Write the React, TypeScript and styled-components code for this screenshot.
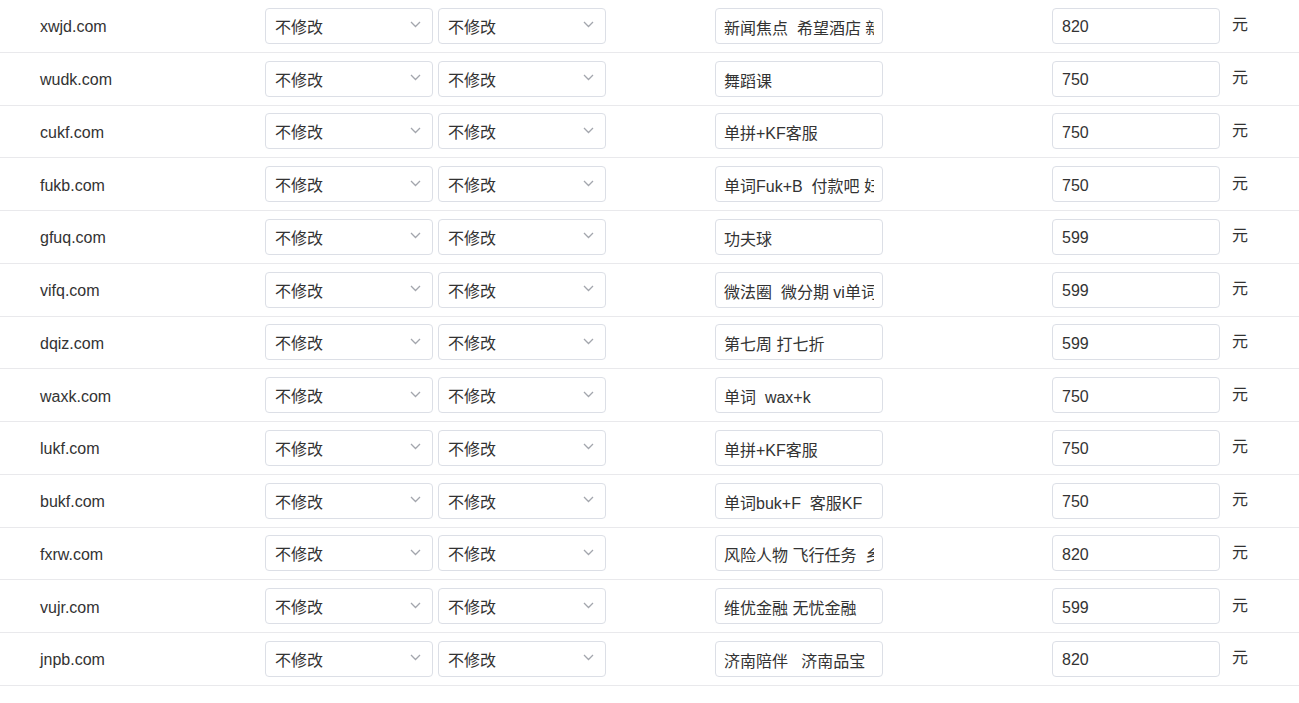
import React from "react";
import styled, { createGlobalStyle } from "styled-components";

const Global = createGlobalStyle`
  html, body { margin: 0; padding: 0; background: #fff; }
  body {
    font-family: "Liberation Sans", "Noto Sans CJK SC", sans-serif;
    color: #333;
    overflow: hidden;
  }
`;

const Table = styled.div`
  width: 1299px;
`;

const Row = styled.div`
  display: grid;
  grid-template-columns: 265px 342px 108px 168px 169px 168px 1fr;
  align-items: center;
  height: 52.75px;
  box-sizing: border-box;
  border-bottom: 1px solid #e9e9ec;
`;

const Domain = styled.div`
  padding-left: 40px;
  font-size: 16px;
  color: #333;
  padding-top: 3px;
`;

const SelectPair = styled.div`
  display: flex;
  gap: 5px;
`;

const Select = styled.div`
  width: 168px;
  height: 36px;
  box-sizing: border-box;
  border: 1px solid #dcdfe6;
  border-radius: 4px;
  display: flex;
  align-items: center;
  justify-content: space-between;
  padding: 0 11px 0 9px;
  font-size: 16px;
  color: #333;
  background: #fff;
`;

const Chevron = styled.svg`
  width: 11px;
  height: 7px;
  margin-top: -2px;
`;

const Input = styled.input`
  width: 168px;
  height: 36px;
  box-sizing: border-box;
  border: 1px solid #dcdfe6;
  border-radius: 4px;
  padding: 2px 8px 0 8px;
  font-family: "Liberation Sans", "Noto Sans CJK SC", sans-serif;
  font-size: 16px;
  color: #333;
  background: #fff;
  outline: none;
`;

const PriceInput = styled(Input)`
  padding: 3px 8px 0 9px;
`;

const Unit = styled.div`
  padding-left: 12px;
  font-size: 16px;
  color: #333;
  margin-top: -5px;
`;

const Spacer = styled.div``;

const rows: [string, string, string][] = [
  ["xwjd.com", "新闻焦点  希望酒店 新闻焦点", "820"],
  ["wudk.com", "舞蹈课", "750"],
  ["cukf.com", "单拼+KF客服", "750"],
  ["fukb.com", "单词Fuk+B  付款吧 妇科", "750"],
  ["gfuq.com", "功夫球", "599"],
  ["vifq.com", "微法圈  微分期 vi单词", "599"],
  ["dqiz.com", "第七周 打七折", "599"],
  ["waxk.com", "单词  wax+k", "750"],
  ["lukf.com", "单拼+KF客服", "750"],
  ["bukf.com", "单词buk+F  客服KF", "750"],
  ["fxrw.com", "风险人物 飞行任务  乡村", "820"],
  ["vujr.com", "维优金融 无忧金融", "599"],
  ["jnpb.com", "济南陪伴   济南品宝", "820"],
];

const SelectBox = () => (
  <Select>
    <span>不修改</span>
    <Chevron viewBox="0 0 11 7">
      <path d="M1 1 L5.5 5.5 L10 1" fill="none" stroke="#a3a6ad" strokeWidth="1.3" />
    </Chevron>
  </Select>
);

export default function App() {
  return (
    <>
      <Global />
      <Table>
        {rows.map(([d, note, price]) => (
          <Row key={d}>
            <Domain>{d}</Domain>
            <SelectPair>
              <SelectBox />
              <SelectBox />
            </SelectPair>
            <Spacer />
            <Input defaultValue={note} />
            <Spacer />
            <PriceInput defaultValue={price} />
            <Unit>元</Unit>
          </Row>
        ))}
      </Table>
    </>
  );
}
